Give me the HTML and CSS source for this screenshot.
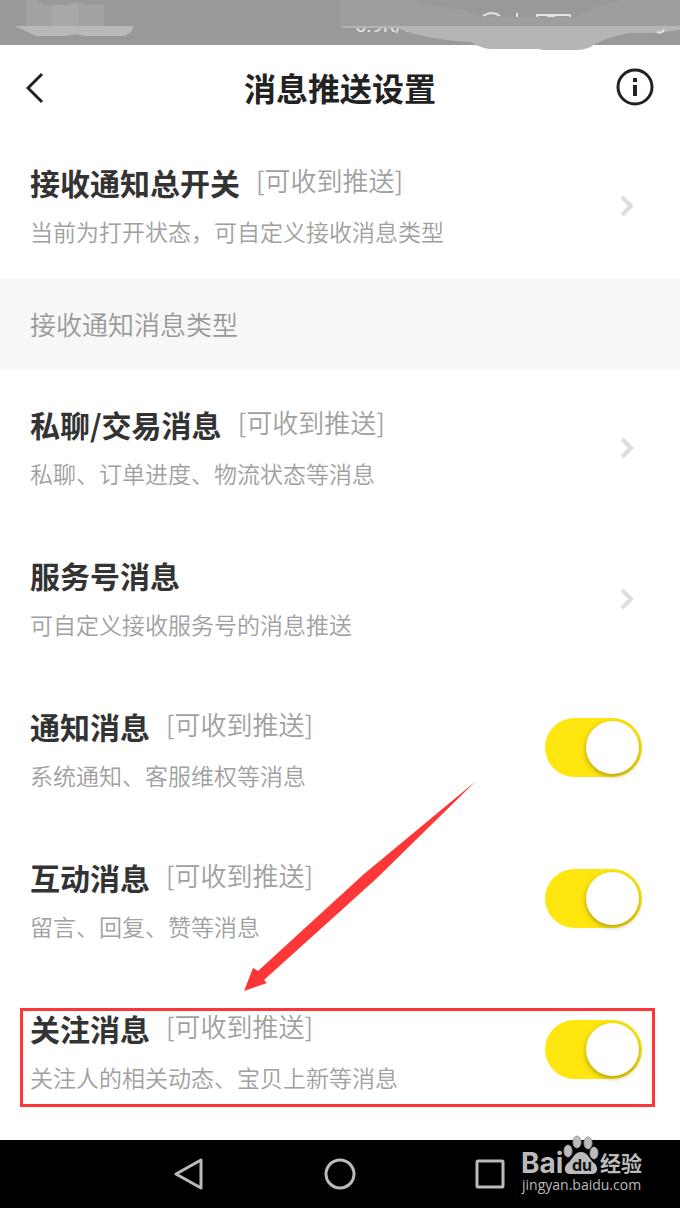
FILE: index.html
```html
<!DOCTYPE html>
<html lang="zh-CN">
<head>
  <meta charset="UTF-8">
  <meta name="viewport" content="width=device-width, initial-scale=1.0">
  <title>消息推送设置</title>
  <link rel="stylesheet" href="styles.css">
</head>
<body>

  <div class="status-bar">
    <svg class="status-art" viewBox="0 0 680 50" aria-hidden="true">
      <path d="M26 0H36L45 5H70L76 2L84 5H104V26H26Z" fill="#a3a3a3"/>
      <path d="M52 5H70L76 2L78 3V26H52Z" fill="#a8a8a8"/>
      <path d="M15 26H134L131 32L125 36H85L76 34L66 36H36Z" fill="#b9b9b9"/>
      <text class="status-text" x="355" y="32">5.9K/s</text>
      <path d="M483 16Q492 10 500 16M517 13V18M537 18V15H570V18M547 17H555" fill="none" stroke="#e3e3e3" stroke-width="2"/>
      <path d="M340 0H412Q430 6 465 10L485 17H575L602 5L625 0H680V26H340Z" fill="#9e9e9e"/>
      <path d="M397 26H680V30L655 33H630Q605 38 595 44Q588 50 575 50H541L540 49H490Q480 48 471 42L455 41Q425 38 402 30Z" fill="#b5b5b5"/>
      <path d="M340 26H400V28H345Z" fill="#b5b5b5"/>
      <path d="M657 32Q663 34 664 29" fill="none" stroke="#e3e3e3" stroke-width="2"/>
    </svg>
  </div>

  <header class="header">
    <button class="icon-button" aria-label="返回">
      <svg width="38" height="38" viewBox="0 0 38 38"><path d="M16 6L2 20L16 34" fill="none" stroke="#222" stroke-width="3"/></svg>
    </button>
    <h1 class="header-title">消息推送设置</h1>
    <button class="icon-button" aria-label="说明">
      <svg width="38" height="38" viewBox="0 0 38 38"><circle cx="19" cy="19" r="17" fill="none" stroke="#222" stroke-width="3"/><path d="M17 10h4v4h-4zM17 17h4v11h-4z" fill="#222"/></svg>
    </button>
  </header>

  <main>
    <a class="row" href="#">
      <div class="row-text">
        <h2 class="row-title">接收通知总开关 <span class="row-hint">[可收到推送]</span></h2>
        <p class="row-desc">当前为打开状态，可自定义接收消息类型</p>
      </div>
      <svg class="chevron" width="14" height="22" viewBox="0 0 14 22"><path d="M2 2L11 11L2 20" fill="none" stroke="#ddd" stroke-width="4"/></svg>
    </a>

    <h2 class="section-title">接收通知消息类型</h2>

    <a class="row" href="#">
      <div class="row-text">
        <h3 class="row-title">私聊/交易消息 <span class="row-hint">[可收到推送]</span></h3>
        <p class="row-desc">私聊、订单进度、物流状态等消息</p>
      </div>
      <svg class="chevron" width="14" height="22" viewBox="0 0 14 22"><path d="M2 2L11 11L2 20" fill="none" stroke="#ddd" stroke-width="4"/></svg>
    </a>

    <a class="row" href="#">
      <div class="row-text">
        <h3 class="row-title">服务号消息</h3>
        <p class="row-desc">可自定义接收服务号的消息推送</p>
      </div>
      <svg class="chevron" width="14" height="22" viewBox="0 0 14 22"><path d="M2 2L11 11L2 20" fill="none" stroke="#ddd" stroke-width="4"/></svg>
    </a>

    <label class="row" for="notice">
      <span class="row-text">
        <span class="row-title">通知消息 <span class="row-hint">[可收到推送]</span></span>
        <span class="row-desc">系统通知、客服维权等消息</span>
      </span>
      <input class="switch" type="checkbox" id="notice" checked>
    </label>

    <label class="row" for="interact">
      <span class="row-text">
        <span class="row-title">互动消息 <span class="row-hint">[可收到推送]</span></span>
        <span class="row-desc">留言、回复、赞等消息</span>
      </span>
      <input class="switch" type="checkbox" id="interact" checked>
    </label>

    <label class="row row-marked" for="follow">
      <span class="row-text">
        <span class="row-title">关注消息 <span class="row-hint">[可收到推送]</span></span>
        <span class="row-desc">关注人的相关动态、宝贝上新等消息</span>
      </span>
      <input class="switch" type="checkbox" id="follow" checked>
      <svg class="arrow" width="234" height="212" viewBox="0 0 234 212" aria-hidden="true"><path d="M0 211L9 188L14 191L120 94L232 1L132 99L20 200L23 203Z" fill="#fd3737"/></svg>
    </label>
  </main>

  <nav class="nav-bar">
    <button class="nav-button" aria-label="返回键">
      <svg width="32" height="32" viewBox="0 0 32 32"><path d="M27 2V30L2 16Z" fill="none" stroke="#bbb" stroke-width="3" stroke-linejoin="round"/></svg>
    </button>
    <button class="nav-button" aria-label="主页键">
      <svg width="32" height="32" viewBox="0 0 32 32"><circle cx="16" cy="16" r="14" fill="none" stroke="#bbb" stroke-width="3"/></svg>
    </button>
    <button class="nav-button" aria-label="任务键">
      <svg width="32" height="32" viewBox="0 0 32 32"><rect x="3" y="3" width="26" height="26" rx="1" fill="none" stroke="#bbb" stroke-width="3"/></svg>
    </button>

    <div class="watermark">
      <svg width="126" height="62" viewBox="0 0 126 62" fill="#bbb">
        <text class="mark-bai" x="0" y="38">Bai</text>
        <g stroke="#999" stroke-width="1">
          <ellipse cx="47" cy="16" rx="4" ry="6"/>
          <ellipse cx="56" cy="7" rx="4" ry="6"/>
          <ellipse cx="67" cy="8" rx="4" ry="6"/>
          <ellipse cx="73" cy="18" rx="4" ry="6"/>
        </g>
        <path d="M60 17C67 17 68 24 73 28C78 32 77 39 71 39H49C43 39 42 32 47 28C52 24 53 17 60 17Z"/>
        <text class="mark-du" x="51" y="36">du</text>
        <text class="mark-cn" x="79" y="36">经验</text>
        <text class="mark-url" x="1" y="55">jingyan.baidu.com</text>
      </svg>
    </div>
  </nav>

</body>
</html>
```
FILE: styles.css
```css
* {
  box-sizing: border-box;
}
body {
  margin: 0;
  min-height: 100vh;
  display: flex;
  flex-direction: column;
  background-color: #fff;
  color: #333;
  font-family: "Noto Sans CJK SC", sans-serif;
}
h1, h2, h3, p {
  margin: 0;
}
button {
  padding: 0;
  border: none;
  background: none;
  cursor: pointer;
}
svg {
  display: block;
}
.status-bar {
  height: 45px;
  background-color: #999;
}
.status-art {
  width: 100%;
}
.status-text {
  font-family: Roboto, sans-serif;
  font-size: 20px;
  fill: #e3e3e3;
}
.header {
  display: flex;
  align-items: center;
  justify-content: space-between;
  height: 83px;
  padding: 0 26px;
}
.header-title {
  font-size: 32px;
  line-height: 44px;
  font-weight: 700;
  color: #222;
}
.row {
  display: flex;
  align-items: center;
  justify-content: space-between;
  padding: 32px 38px 32px 30px;
  color: inherit;
  text-decoration: none;
}
.row-text {
  display: flex;
  flex-direction: column;
  gap: 11px;
}
.row-title {
  display: flex;
  align-items: center;
  gap: 16px;
  font-size: 30px;
  line-height: 44px;
  font-weight: 700;
}
.row-hint {
  font-size: 26px;
  line-height: 40px;
  padding-bottom: 4px;
  font-weight: 350;
  color: #a0a0a0;
}
.row-desc {
  font-size: 23px;
  line-height: 32px;
  font-weight: 350;
  color: #a0a0a0;
}
.chevron {
  margin: 4px 8px 0 0;
}
.section-title {
  padding: 25px 30px 26px;
  background-color: #f7f7f7;
  font-size: 26px;
  line-height: 40px;
  font-weight: 350;
  color: #999;
}
.switch {
  appearance: none;
  display: flex;
  align-items: center;
  justify-content: flex-end;
  width: 97px;
  height: 59px;
  margin: 0;
  padding: 3px;
  border-radius: 30px;
  background-color: #ffe60f;
  cursor: pointer;
}
.switch::before {
  content: "";
  width: 53px;
  height: 53px;
  border-radius: 50%;
  background-color: #fff;
  box-shadow: 0 2px 5px rgba(90, 80, 0, 0.5);
}
.switch:not(:checked) {
  justify-content: flex-start;
  background-color: #ddd;
}
.row-marked {
  position: relative;
}
.row-marked::after {
  content: "";
  position: absolute;
  top: 34px;
  left: 20px;
  right: 25px;
  height: 93px;
  border: 3px solid #fd3737;
}
.arrow {
  position: absolute;
  top: -194px;
  left: 244px;
}
.nav-bar {
  position: relative;
  display: flex;
  align-items: center;
  justify-content: center;
  gap: 94px;
  height: 68px;
  margin-top: auto;
  background-color: #000;
}
.nav-button {
  display: flex;
  align-items: center;
  justify-content: center;
  width: 56px;
  height: 56px;
}
.watermark {
  position: absolute;
  top: -5px;
  right: 33px;
}
.mark-bai {
  font-family: Inter, sans-serif;
  font-size: 28px;
  font-weight: 700;
}
.mark-du {
  font-family: Inter, sans-serif;
  font-size: 16px;
  font-weight: 700;
  fill: #111;
}
.mark-cn {
  font-size: 21px;
  font-weight: 700;
}
.mark-url {
  font-family: "Open Sans", sans-serif;
  font-size: 14px;
}
```
